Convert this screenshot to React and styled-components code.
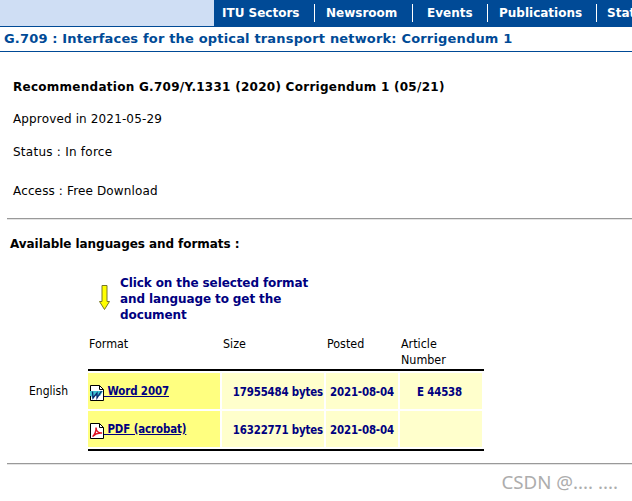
import React from 'react'
import styled, {createGlobalStyle} from 'styled-components'

const GlobalStyle = createGlobalStyle`
    html, body {
        margin: 0;
        padding: 0;
        background: #fff;
    }
    body {
        font-family: "DejaVu Sans", Verdana, sans-serif;
        font-size: 12px;
        color: #000;
    }
`

const Page = styled.div`
    width: 632px;
    height: 501px;
    overflow: hidden;
`

const TopBar = styled.div`
    display: flex;
    height: 26px;
    border-bottom: 1px solid #004a96;
`

const TopSpacer = styled.div`
    width: 214px;
    flex-shrink: 0;
    background: #cfdef4;
`

const Nav = styled.nav`
    flex: 1;
    display: flex;
    align-items: center;
    background: #004a96;
    overflow: hidden;
`

const NavItem = styled.a`
    flex-shrink: 0;
    box-sizing: border-box;
    height: 18px;
    width: ${p => p.$width}px;
    padding-left: ${p => p.$pad}px;
    line-height: 18px;
    border-right: ${p => (p.$last ? 'none' : '1px solid #fff')};
    color: #fff;
    font-size: 12px;
    font-weight: bold;
    white-space: nowrap;
`

const Title = styled.h1`
    margin: 0;
    height: 24px;
    padding-left: 4px;
    border-bottom: 1px solid #004a96;
    color: #004a96;
    font-size: 13px;
    font-weight: bold;
    letter-spacing: 0.17px;
    line-height: 24px;
    white-space: nowrap;
`

const Info = styled.div`
    height: 167px;
    margin-left: 7px;
    padding: 27px 0 0 6px;
    box-sizing: border-box;
    border-bottom: 1px solid #999;
    box-shadow: 0 1px 0 #e4e4e4;
`

const Heading = styled.div`
    font-weight: bold;
    letter-spacing: 0.27px;
    line-height: 16px;
    margin-bottom: 16px;
`

const InfoLine = styled.div`
    line-height: 16px;
    letter-spacing: ${p => p.$spacing}px;
    margin-bottom: ${p => p.$gap}px;
`

const Section = styled.div`
    margin-left: 7px;
    height: 245px;
    box-sizing: border-box;
    padding-top: 17px;
    border-bottom: 1px solid #999;
    box-shadow: 0 1px 0 #e4e4e4;
`

const SectionTitle = styled.div`
    margin-left: 3px;
    font-weight: bold;
    letter-spacing: -0.06px;
    line-height: 16px;
`

const Hint = styled.div`
    display: flex;
    margin: 23px 0 0 92px;
`

const HintArrow = styled.svg`
    width: 11px;
    height: 25px;
    margin: 10px 10px 0 0;
    flex-shrink: 0;
`

const HintText = styled.div`
    width: 205px;
    color: #000080;
    font-weight: bold;
    letter-spacing: -0.1px;
    line-height: 16px;
`

const TableRow = styled.div`
    display: flex;
    margin-top: 12px;
`

const Language = styled.div`
    width: 81px;
    box-sizing: border-box;
    padding: 48px 0 0 22px;
    font-family: "DejaVu Sans Condensed", "DejaVu Sans", sans-serif;
    font-size: 12px;
    line-height: 16px;
`

const FormatTable = styled.table`
    width: 396px;
    height: 116px;
    table-layout: fixed;
    border-collapse: separate;
    border-spacing: 0;
    border-bottom: 2px solid #000;
    tr:last-child td {
        border-bottom: 2px solid #fff;
    }
`

const Head = styled.thead`
    th {
        height: 36px;
        box-sizing: border-box;
        padding: 1px 12px 0 1px;
        border-bottom: 2px solid #000;
        font-family: "DejaVu Sans Condensed", "DejaVu Sans", sans-serif;
        font-size: 12.4px;
        font-weight: normal;
        line-height: 16px;
        text-align: left;
        vertical-align: top;
    }
`

const Cell = styled.td`
    height: 35px;
    padding: 1px 1px 0 0;
    border: solid #fff;
    border-width: 2px 2px 0 0;
    background: #ffffcc;
    color: #000080;
    font-family: "DejaVu Sans Condensed", "DejaVu Sans", sans-serif;
    font-size: 11.4px;
    font-weight: bold;
    letter-spacing: -0.17px;
    text-align: right;
    white-space: nowrap;
`

const DateCell = styled(Cell)`
    padding-left: 4px;
    text-align: left;
`

const NumberCell = styled(Cell)`
    padding-right: 3px;
    text-align: center;
`

const FormatCell = styled(Cell)`
    padding: 0;
    background: #ffff80;
    letter-spacing: -0.1px;
    text-align: left;
    vertical-align: top;
`

const FormatLink = styled.a`
    display: inline-flex;
    align-items: flex-end;
    height: 35px;
    color: #000080;
    text-decoration: underline;
    white-space: pre;
`

const LinkLabel = styled.span`
    position: relative;
    top: -10px;
    line-height: 14px;
`

const DocIcon = styled.svg`
    width: 14px;
    height: 16px;
    margin: 0 0 7px 2px;
    flex-shrink: 0;
`

const Watermark = styled.div`
    margin-top: 6px;
    padding-right: 14px;
    text-align: right;
    color: #adadad;
    font-family: "Noto Sans", sans-serif;
    font-size: 18.7px;
    line-height: 23px;
`

const WordIcon = () => (
    <DocIcon viewBox="0 0 14 16">
        <path d="M.5.5H9.5L13.5 4.5V15.5H.5Z" fill="#fff" stroke="#000" />
        <path d="M9.5.5V4.5H13.5" fill="none" stroke="#000" />
        <path d="M0 6H13L10 11H5L3 14L1 11H0Z" fill="#3fc0d0" />
        <path d="M2.5 6.5L3 13L7 8L7 13L11.5 6" fill="none" stroke="#0a2a70" strokeWidth="1.3" />
    </DocIcon>
)

const PdfIcon = () => (
    <DocIcon viewBox="0 0 14 16">
        <path d="M.5.5H9.5L13.5 4.5V15.5H.5Z" fill="#fff" stroke="#000" />
        <path d="M9.5.5V4.5H13.5" fill="none" stroke="#000" />
        <path d="M2.5 13.5C4.5 12 6.5 8 6 4.5C6 8 8.5 10.5 12 10C8.5 9.5 5 11 2.5 13.5Z" fill="none" stroke="#e01020" strokeWidth="1.5" />
    </DocIcon>
)

const App = () => (
    <Page>
        <GlobalStyle />
        <TopBar>
            <TopSpacer />
            <Nav>
                <NavItem $width={101} $pad={8}>ITU Sectors</NavItem>
                <NavItem $width={98} $pad={11}>Newsroom</NavItem>
                <NavItem $width={75} $pad={14}>Events</NavItem>
                <NavItem $width={109} $pad={11}>Publications</NavItem>
                <NavItem $width={35} $pad={10} $last>Statistics</NavItem>
            </Nav>
        </TopBar>
        <Title>G.709 : Interfaces for the optical transport network: Corrigendum 1</Title>
        <Info>
            <Heading>Recommendation G.709/Y.1331 (2020) Corrigendum 1 (05/21)</Heading>
            <InfoLine $gap={17} $spacing={0.14}>Approved in 2021-05-29</InfoLine>
            <InfoLine $gap={23} $spacing={0.25}>Status : In force</InfoLine>
            <InfoLine $gap={0} $spacing={0.14}>Access : Free Download</InfoLine>
        </Info>
        <Section>
            <SectionTitle>Available languages and formats :</SectionTitle>
            <Hint>
                <HintArrow viewBox="0 0 11 25">
                    <path d="M3 .5H8V16.5H10.5L5.5 24.5L.5 16.5H3Z" fill="#ffff00" stroke="#77772a" />
                </HintArrow>
                <HintText>Click on the selected format and language to get the document</HintText>
            </Hint>
            <TableRow>
                <Language>English</Language>
                <FormatTable>
                    <colgroup>
                        <col style={{width: 134}} />
                        <col style={{width: 104}} />
                        <col style={{width: 74}} />
                        <col style={{width: 84}} />
                    </colgroup>
                    <Head>
                        <tr>
                            <th>Format</th>
                            <th>Size</th>
                            <th>Posted</th>
                            <th>Article Number</th>
                        </tr>
                    </Head>
                    <tbody>
                        <tr>
                            <FormatCell>
                                <FormatLink>
                                    <WordIcon />
                                    <LinkLabel> Word 2007</LinkLabel>
                                </FormatLink>
                            </FormatCell>
                            <Cell>17955484 bytes</Cell>
                            <DateCell>2021-08-04</DateCell>
                            <NumberCell>E 44538</NumberCell>
                        </tr>
                        <tr>
                            <FormatCell>
                                <FormatLink>
                                    <PdfIcon />
                                    <LinkLabel> PDF (acrobat)</LinkLabel>
                                </FormatLink>
                            </FormatCell>
                            <Cell>16322771 bytes</Cell>
                            <DateCell>2021-08-04</DateCell>
                            <NumberCell />
                        </tr>
                    </tbody>
                </FormatTable>
            </TableRow>
        </Section>
        <Watermark>CSDN @.... ....</Watermark>
    </Page>
)

export default App
